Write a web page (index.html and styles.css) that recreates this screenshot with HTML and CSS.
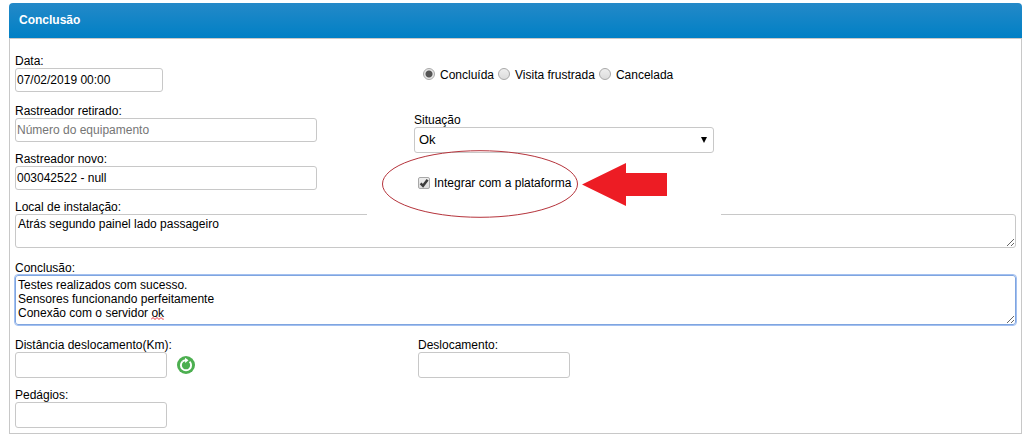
FILE: index.html
```html
<!DOCTYPE html>
<html lang="pt-BR">
<head>
<meta charset="utf-8">
<title>Conclusão</title>
<link rel="stylesheet" href="styles.css">
</head>
<body>
<form class="panel">
  <h1 class="panel-title">Conclusão</h1>
  <div class="panel-body">
    <div class="columns">
      <div class="left">
        <div class="field field-date">
          <label for="data">Data:</label>
          <input class="box date" id="data" type="text" value="07/02/2019 00:00">
        </div>
        <div class="field">
          <label for="retirado">Rastreador retirado:</label>
          <input class="box device" id="retirado" type="text" placeholder="Número do equipamento">
        </div>
        <div class="field">
          <label for="novo">Rastreador novo:</label>
          <input class="box device" id="novo" type="text" value="003042522 - null">
        </div>
      </div>
      <div class="right">
        <div class="radios">
          <input type="radio" name="status" id="concluida" checked><label for="concluida">Concluída</label>
          <input type="radio" name="status" id="frustrada"><label for="frustrada">Visita frustrada</label>
          <input type="radio" name="status" id="cancelada"><label for="cancelada">Cancelada</label>
        </div>
        <div class="field">
          <label for="situacao">Situação</label>
          <div class="select-wrap">
            <select class="box" id="situacao"><option>Ok</option></select>
            <svg class="caret" viewBox="0 0 6 6" aria-hidden="true"><path d="M0 0h6L3 6z"/></svg>
          </div>
        </div>
        <div class="check">
          <svg class="callout" viewBox="0 0 354 68" aria-hidden="true">
            <path fill="#fff" d="M0 5h354v63H0z"/>
            <ellipse cx="113" cy="34" rx="97.5" ry="33.3" fill="none" stroke="#b5333b"/>
            <path fill="#ed1c24" d="M215 34.500L259 13v10h41v23h-41v10z"/>
          </svg>
          <span class="tickbox">
            <input type="checkbox" id="integrar" checked>
            <svg class="tick" viewBox="0 0 12 12" aria-hidden="true"><path d="M2.600 6.400L5 8.800L9.600 2.800" fill="none" stroke="#3c3c3c" stroke-width="2.500"/></svg>
          </span>
          <label for="integrar">Integrar com a plataforma</label>
        </div>
      </div>
    </div>
    <div class="field field-local">
      <label for="local">Local de instalação:</label>
      <textarea class="box local" id="local" spellcheck="false">Atrás segundo painel lado passageiro</textarea>
    </div>
    <div class="field field-notes">
      <label for="conclusao">Conclusão:</label>
      <textarea class="box notes" id="conclusao" spellcheck="false">Testes realizados com sucesso.
Sensores funcionando perfeitamente
Conexão com o servidor ok</textarea>
      <svg class="squiggle" viewBox="0 0 13 3" aria-hidden="true"><path d="M0 2.500l2-2 2 2 2-2 2 2 2-2 2 2 1-1" fill="none" stroke="#e8303a"/></svg>
    </div>
    <div class="columns distances">
      <div class="field">
        <label for="distancia">Distância deslocamento(Km):</label>
        <div class="with-button">
          <input class="box amount" id="distancia" type="text">
          <button class="refresh" type="button" aria-label="Recalcular">
            <svg viewBox="0 0 18 18" aria-hidden="true">
              <circle cx="9" cy="9" r="9" fill="#4caf50"/>
              <path d="M5.400 5.600A5.100 5.100 0 1 0 12.600 5.600" fill="none" stroke="#fff" stroke-width="1.900"/>
              <path d="M5.300 5.700A5 5 0 0 1 9 4.200" fill="none" stroke="#fff" stroke-width="1.900"/>
              <path d="M8 1.800L11.500 4.200L8.200 7z" fill="#fff"/>
            </svg>
          </button>
        </div>
      </div>
      <div class="field field-travel">
        <label for="deslocamento">Deslocamento:</label>
        <input class="box amount" id="deslocamento" type="text">
      </div>
    </div>
    <div class="field">
      <label for="pedagios">Pedágios:</label>
      <input class="box amount" id="pedagios" type="text">
    </div>
  </div>
</form>
</body>
</html>
```
FILE: styles.css
```css
* { box-sizing: border-box; }

body {
  margin: 3px 9px 8px;
  background: #fff;
  color: #000;
  font: 12px/14px "Liberation Sans", Arial, sans-serif;
}

.panel-title {
  margin: 0;
  padding: 10px;
  border-radius: 4px 4px 0 0;
  background: linear-gradient(#2489c8, #0080c5);
  color: #fff;
  font-size: 12px;
  line-height: 15px;
}

.panel-body {
  padding: 15px 5px 5px;
  border: 1px solid #c8c8c8;
}

.columns {
  display: grid;
  grid-template-columns: 399px 1fr;
}

.left {
  display: flex;
  flex-direction: column;
  gap: 10px;
}

.field {
  display: flex;
  flex-direction: column;
  align-items: flex-start;
}

.field-date { margin-bottom: 2px; }

.box {
  height: 26px;
  margin: 0;
  padding: 0 1px;
  border: 1px solid #c8c8c8;
  border-radius: 3px;
  background: #fff;
  color: #000;
  font: inherit;
}

.box::placeholder { color: #757575; }

.date { width: 148px; height: 24px; }
.device { width: 302px; height: 24px; }
.amount { width: 152px; }

.radios {
  display: flex;
  align-items: center;
  height: 39px;
  margin-bottom: 20px;
  padding-left: 9px;
}

.radios label { margin: 2px 4px 0 5px; }

input[type="radio"],
input[type="checkbox"] {
  appearance: none;
  flex: none;
  width: 12px;
  height: 12px;
  margin: 0;
  border: 1px solid #a8a8a8;
  background: linear-gradient(#eee, #dcdcdc);
}

input[type="radio"] { border-radius: 50%; }

input[type="radio"]:checked {
  background: radial-gradient(circle, #555 0 3px, #e6e6e6 4px);
}

input[type="checkbox"] {
  display: block;
  border-radius: 2px;
}

.tickbox {
  position: relative;
  width: 12px;
  height: 12px;
}

.tick {
  display: none;
  position: absolute;
  inset: 0;
  pointer-events: none;
}

input:checked + .tick { display: block; }

.select-wrap {
  position: relative;
  width: 300px;
}

.select-wrap select {
  display: block;
  appearance: none;
  width: 100%;
  padding: 0 4px;
  font-size: 13px;
}

.caret {
  position: absolute;
  top: 10px;
  right: 7px;
  width: 6px;
  height: 6px;
}

.check {
  display: flex;
  position: relative;
  align-items: center;
  gap: 4px;
  margin-top: 23px;
  padding-left: 4px;
}

.check label { position: relative; }

.callout {
  position: absolute;
  left: -47px;
  top: -26px;
  width: 354px;
  height: 68px;
}

.field-local {
  margin: 10px 0 13px;
}

textarea.box {
  display: block;
  width: 100%;
  padding: 2px;
  resize: both;
}

.local { height: 34px; }

.field-notes {
  position: relative;
  margin-bottom: 13px;
}

textarea.notes {
  height: 50px;
  border-color: #7fa5e0;
  outline: 1px solid #a3c0f0;
}

.squiggle {
  position: absolute;
  left: 136px;
  top: 56px;
  width: 13px;
  height: 3px;
}

.distances { margin-bottom: 10px; }

.field-travel { margin-left: 4px; }

.with-button {
  display: flex;
  align-items: center;
  gap: 10px;
}

.refresh {
  width: 18px;
  height: 18px;
  padding: 0;
  border: 0;
  background: none;
}

.refresh svg { display: block; }
```
